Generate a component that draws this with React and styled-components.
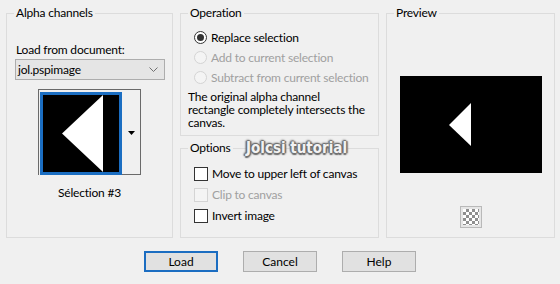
import styled, { createGlobalStyle } from "styled-components";

const GlobalStyle = createGlobalStyle`
  html, body {
    margin: 0;
    padding: 0;
    background: #f0f0f0;
  }
  body {
    font-family: Lato, "Noto Sans", sans-serif;
    font-size: 12px;
    letter-spacing: -0.2px;
    color: #000;
  }
`;

const Dialog = styled.div`
  position: relative;
  width: 560px;
  height: 284px;
  box-sizing: border-box;
  padding-top: 5px;
  overflow: hidden;
`;

const Panels = styled.div`
  display: grid;
  grid-template-columns: 167px 199px 169px;
  justify-content: space-between;
  width: 549px;
  margin-left: 6px;
`;

const Column = styled.div`
  display: flex;
  flex-direction: column;
  gap: 4px;
`;

const Group = styled.fieldset`
  margin: 0;
  padding: 0;
  min-width: 0;
  box-sizing: border-box;
  height: ${(p) => p.$height}px;
  border: 1px solid #dcdcdc;
  display: flex;
  flex-direction: column;
  align-items: ${(p) => (p.$center ? "center" : "stretch")};
`;

const Legend = styled.legend`
  margin-left: 7px;
  padding: 0 2px;
  line-height: 16px;
`;

const FieldLabel = styled.div`
  margin: 21px 0 0 9px;
  line-height: 16px;
`;

const Select = styled.div`
  margin: 1px 0 0 8px;
  width: 150px;
  height: 21px;
  box-sizing: border-box;
  border: 1px solid #adadad;
  background: #e5e5e5;
  display: flex;
  align-items: center;
  justify-content: space-between;
  padding: 0 6px 0 2px;
  line-height: 16px;
`;

const Thumb = styled.div`
  align-self: center;
  margin-top: 9px;
  width: 103px;
  height: 86px;
  box-sizing: border-box;
  border: 1px solid #6a6a6a;
  border-bottom: none;
  padding: 2px 0 0 1px;
  display: flex;
`;

const ThumbArrow = styled.div`
  flex: 1;
  display: flex;
  align-items: center;
  justify-content: center;
  border-bottom: 1px solid #6a6a6a;
`;

const Caption = styled.div`
  align-self: center;
  margin-top: 10px;
  line-height: 16px;
`;

const OptionList = styled.div`
  margin-top: ${(p) => p.$top}px;
  padding-left: 13px;
  display: flex;
  flex-direction: column;
`;

const OptionRow = styled.label`
  display: flex;
  align-items: center;
  gap: 4px;
  height: ${(p) => p.$height}px;
  white-space: nowrap;
  color: ${(p) => (p.$disabled ? "#a0a0a0" : "#000")};
`;

const Radio = styled.span`
  position: relative;
  flex: none;
  width: 13px;
  height: 13px;
  box-sizing: border-box;
  border-radius: 50%;
  border: 1px solid ${(p) => (p.$disabled ? "#d4d4d4" : "#333")};
  background: ${(p) => (p.$disabled ? "#f4f4f4" : "#fff")};

  &::after {
    content: "";
    display: ${(p) => (p.$checked ? "block" : "none")};
    position: absolute;
    left: 2px;
    top: 2px;
    width: 7px;
    height: 7px;
    border-radius: 50%;
    background: #333;
  }
`;

const Checkbox = styled.span`
  flex: none;
  width: 14px;
  height: 14px;
  box-sizing: border-box;
  border: 1px solid ${(p) => (p.$disabled ? "#d4d4d4" : "#333")};
  background: ${(p) => (p.$disabled ? "#f4f4f4" : "#fff")};
`;

const Description = styled.p`
  margin: 3px 0 0 7px;
  line-height: 13px;
  white-space: nowrap;
`;

const PreviewCanvas = styled.div`
  margin-top: 55px;
  width: 142px;
  height: 97px;
  background: #000;
  display: flex;
`;

const CheckerButton = styled.div`
  margin-top: 33px;
  width: 22px;
  height: 22px;
  box-sizing: border-box;
  border: 1px solid #b9b9b9;
  padding: 2px;
  background: #e6e6e6;
`;

const Checker = styled.div`
  width: 16px;
  height: 16px;
  background-color: #fff;
  background-image: conic-gradient(
    #8f8f8f 25%,
    #fff 0 50%,
    #8f8f8f 0 75%,
    #fff 0
  );
  background-size: 6px 6px;
`;

const ButtonRow = styled.div`
  display: flex;
  justify-content: center;
  gap: 25px;
  margin-top: 13px;
`;

const Button = styled.button`
  width: 74px;
  height: 21px;
  box-sizing: border-box;
  padding: 0;
  border: ${(p) => (p.$primary ? "2px solid #1b6dc1" : "1px solid #adadad")};
  background: #e1e1e1;
  font: inherit;
  color: #000;
  line-height: 16px;
`;

const Watermark = styled.div`
  position: absolute;
  left: 246px;
  top: 139px;
  font-family: "DejaVu Sans Condensed", "DejaVu Sans", sans-serif;
  font-weight: bold;
  font-size: 15px;
  letter-spacing: 0;
  line-height: 19px;
  color: #f2f2f2;
  text-shadow: 1.5px 0 1px #6e6e6e, -1.5px 0 1px #6e6e6e, 0 1.5px 1px #6e6e6e,
    0 -1.5px 1px #6e6e6e, 1px 1px 2px #888, -1px -1px 2px #888,
    0 0 3px #999;
`;

const operations = [
  { label: "Replace selection", checked: true },
  { label: "Add to current selection", disabled: true },
  { label: "Subtract from current selection", disabled: true },
];

const options = [
  { label: "Move to upper left of canvas" },
  { label: "Clip to canvas", disabled: true },
  { label: "Invert image" },
];

export default function App() {
  return (
    <Dialog>
      <GlobalStyle />
      <Panels>
        <Group $height={233}>
          <Legend>Alpha channels</Legend>
          <FieldLabel>Load from document:</FieldLabel>
          <Select>
            <span>jol.pspimage</span>
            <svg width="9" height="5" viewBox="0 0 9 5">
              <path d="M0.5 0.5 L4.5 4.5 L8.5 0.5" fill="none" stroke="#707070" strokeWidth="1" />
            </svg>
          </Select>
          <Thumb>
            <svg width="82" height="83" viewBox="0 0 82 83">
              <rect x="1.5" y="1.5" width="79" height="80" fill="#000" stroke="#1b6ec2" strokeWidth="3" />
              <polygon points="22,41.5 63,3 63,80" fill="#fff" />
            </svg>
            <ThumbArrow>
              <svg width="7" height="4" viewBox="0 0 7 4">
                <polygon points="0,0 7,0 3.5,4" fill="#000" />
              </svg>
            </ThumbArrow>
          </Thumb>
          <Caption>Sélection #3</Caption>
        </Group>

        <Column>
          <Group $height={131}>
            <Legend>Operation</Legend>
            <OptionList $top={6}>
              {operations.map((op) => (
                <OptionRow key={op.label} $height={20} $disabled={op.disabled}>
                  <Radio $checked={op.checked} $disabled={op.disabled} />
                  {op.label}
                </OptionRow>
              ))}
            </OptionList>
            <Description>
              The original alpha channel
              <br />
              rectangle completely intersects the
              <br />
              canvas.
            </Description>
          </Group>
          <Group $height={98}>
            <Legend>Options</Legend>
            <OptionList $top={7}>
              {options.map((op) => (
                <OptionRow key={op.label} $height={21} $disabled={op.disabled}>
                  <Checkbox $disabled={op.disabled} />
                  {op.label}
                </OptionRow>
              ))}
            </OptionList>
          </Group>
        </Column>

        <Group $height={233} $center>
          <Legend>Preview</Legend>
          <PreviewCanvas>
            <svg width="142" height="97" viewBox="0 0 142 97">
              <polygon points="49,49 71,27 71,70" fill="#fff" />
            </svg>
          </PreviewCanvas>
          <CheckerButton>
            <Checker />
          </CheckerButton>
        </Group>
      </Panels>

      <ButtonRow>
        <Button $primary>Load</Button>
        <Button>Cancel</Button>
        <Button>Help</Button>
      </ButtonRow>

      <Watermark>Jolcsi tutorial</Watermark>
    </Dialog>
  );
}
